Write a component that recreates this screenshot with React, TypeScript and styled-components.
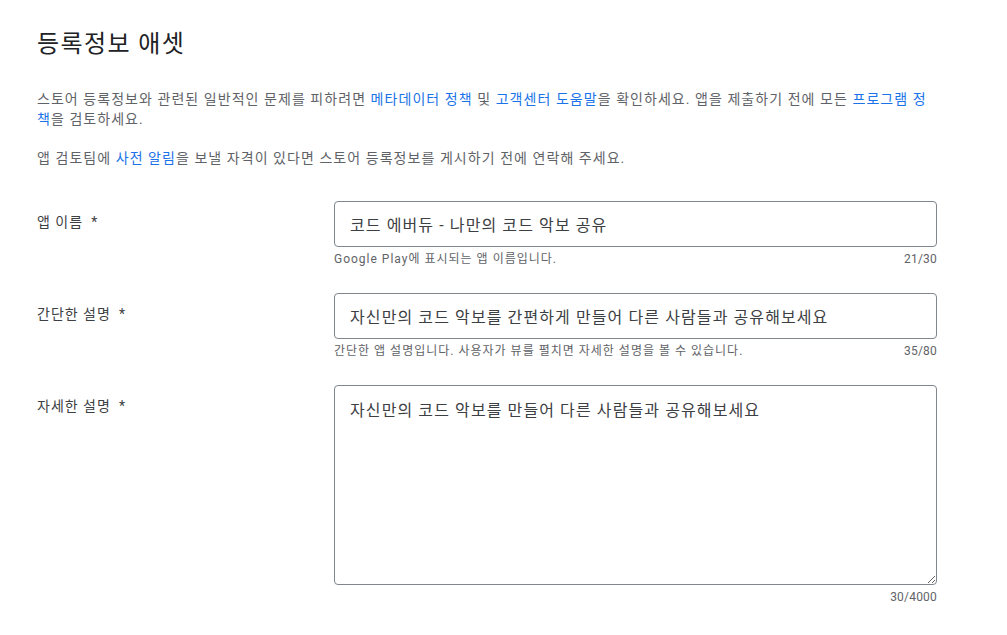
import React from "react";
import styled, { createGlobalStyle } from "styled-components";

const GlobalStyle = createGlobalStyle`
  html, body { margin: 0; padding: 0; background: #ffffff; }
  body { font-family: Roboto, "Noto Sans CJK KR", "Noto Sans", sans-serif; color: #5f6368; }
`;

const Page = styled.div`
  width: 900px;
  padding: 28px 0 0 37px;
`;

const Title = styled.h1`
  margin: 0 0 30px;
  font-size: 24px;
  line-height: 32px;
  font-weight: 400;
  letter-spacing: 1.4px;
  color: #202124;
`;

const Paragraph = styled.p`
  margin: 0 0 20px;
  font-size: 14px;
  line-height: 19.5px;
  letter-spacing: 1.05px;
  color: #5f6368;
`;

const Link = styled.a`
  color: #1a73e8;
  text-decoration: none;
`;

const Form = styled.div`
  display: flex;
  flex-direction: column;
  gap: 26px;
  margin-top: 32px;
`;

const Row = styled.div`
  display: grid;
  grid-template-columns: 297px 603px;
  align-items: start;
`;

const Label = styled.div`
  padding-top: 11px;
  font-size: 14px;
  line-height: 20px;
  letter-spacing: 1px;
  color: #3c4043;
`;

const Star = styled.span`
  margin-left: 8px;
`;

const Field = styled.div`
  display: flex;
  flex-direction: column;
`;

const TextInput = styled.input`
  box-sizing: border-box;
  width: 100%;
  height: 46px;
  padding: 0 15px;
  border: 1px solid #80868b;
  border-radius: 4px;
  font-family: inherit;
  font-size: 16px;
  letter-spacing: 1.1px;
  color: #3c4043;
  outline: none;
  background: #fff;
`;

const TextArea = styled.textarea`
  box-sizing: border-box;
  width: 100%;
  height: 200px;
  padding: 13px 15px;
  border: 1px solid #80868b;
  border-radius: 4px;
  font-family: inherit;
  font-size: 16px;
  line-height: 24px;
  letter-spacing: 1.1px;
  color: #3c4043;
  outline: none;
  resize: vertical;
  background: #fff;
  display: block;
`;

const Helper = styled.div`
  display: flex;
  justify-content: space-between;
  margin-top: 4px;
  font-size: 12px;
  line-height: 16px;
  letter-spacing: 1px;
  color: #5f6368;
`;

const Counter = styled.span`
  margin-left: auto;
  letter-spacing: 0.2px;
  color: #5f6368;
`;

export default function App() {
  return (
    <>
      <GlobalStyle />
      <Page>
        <Title>등록정보 애셋</Title>
        <Paragraph>
          스토어 등록정보와 관련된 일반적인 문제를 피하려면 <Link>메타데이터 정책</Link> 및{" "}
          <Link>고객센터 도움말</Link>을 확인하세요. 앱을 제출하기 전에 모든{" "}
          <Link>프로그램 정책</Link>을 검토하세요.
        </Paragraph>
        <Paragraph>
          앱 검토팀에 <Link>사전 알림</Link>을 보낼 자격이 있다면 스토어 등록정보를 게시하기 전에 연락해 주세요.
        </Paragraph>
        <Form>
          <Row>
            <Label>
              앱 이름<Star>*</Star>
            </Label>
            <Field>
              <TextInput defaultValue="코드 에버듀 - 나만의 코드 악보 공유" />
              <Helper>
                <span>Google Play에 표시되는 앱 이름입니다.</span>
                <Counter>21/30</Counter>
              </Helper>
            </Field>
          </Row>
          <Row>
            <Label>
              간단한 설명<Star>*</Star>
            </Label>
            <Field>
              <TextInput defaultValue="자신만의 코드 악보를 간편하게 만들어 다른 사람들과 공유해보세요" />
              <Helper>
                <span>간단한 앱 설명입니다. 사용자가 뷰를 펼치면 자세한 설명을 볼 수 있습니다.</span>
                <Counter>35/80</Counter>
              </Helper>
            </Field>
          </Row>
          <Row>
            <Label>
              자세한 설명<Star>*</Star>
            </Label>
            <Field>
              <TextArea defaultValue="자신만의 코드 악보를 만들어 다른 사람들과 공유해보세요" />
              <Helper>
                <Counter>30/4000</Counter>
              </Helper>
            </Field>
          </Row>
        </Form>
      </Page>
    </>
  );
}
